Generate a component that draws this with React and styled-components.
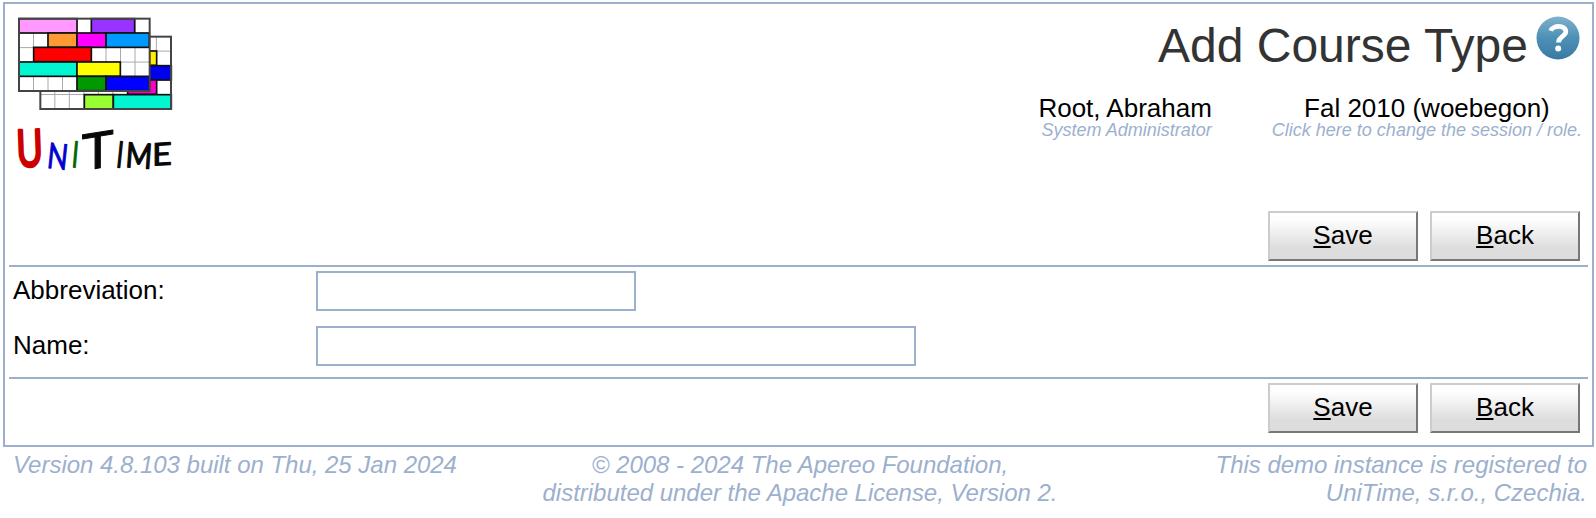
import React from "react";
import styled, { createGlobalStyle } from "styled-components";

const accent = "#9cb0ce";

const GlobalStyle = createGlobalStyle`
  * { box-sizing: border-box; }
  body {
    margin: 0;
    background: #fff;
    color: #000;
    font-family: "Liberation Sans", Arial, sans-serif;
    font-size: 26px;
  }
`;

const Page = styled.div`
  padding: 2px 2px 0 3px;
`;

const Frame = styled.main`
  height: 445px;
  border: 2px solid ${accent};
  padding: 0 4px;
`;

const Header = styled.header`
  display: flex;
  justify-content: space-between;
  align-items: flex-start;
  height: 207px;
  padding: 10px 6px 0 6px;
`;

const Logo = styled.svg`
  display: block;
  width: 170px;
  height: 180px;
  overflow: visible;
`;

const HeaderInfo = styled.div`
  display: flex;
  flex-direction: column;
  align-items: flex-end;
`;

const TitleRow = styled.div`
  display: flex;
  align-items: flex-start;
  gap: 7px;
  height: 77px;
  padding-right: 1px;
`;

const Title = styled.h1`
  margin: 4px 0 0;
  color: #333;
  font-size: 48px;
  font-weight: 400;
  line-height: 56px;
`;

const HelpIcon = styled.svg`
  display: block;
  width: 46px;
  height: 46px;
  margin-top: 1px;
`;

const Account = styled.div`
  display: flex;
  gap: 60px;
`;

const AccountItem = styled.div`
  display: flex;
  flex-direction: column;
  align-items: ${(p) => p.$align};
`;

const AccountValue = styled.div`
  line-height: 30px;
  height: 29px;
  padding-top: 2px;
`;

const AccountHint = styled.div`
  color: ${accent};
  font-size: 18px;
  font-style: italic;
  line-height: 20px;
`;

const ButtonBar = styled.div`
  display: flex;
  justify-content: flex-end;
  gap: 12px;
  padding: ${(p) => (p.$bottom ? "4px 8px 12px" : "0 8px 4px")};
`;

const Button = styled.button`
  width: 150px;
  height: 50px;
  padding: 0 0 2px;
  border: 2px solid;
  border-color: #ccc #777 #777 #ccc;
  border-radius: 0;
  background: linear-gradient(#fff 0%, #fcfcfc 18%, #ddd 76%, #ddd 100%);
  color: #000;
  font: inherit;
`;

const AccessKey = styled.span`
  text-decoration: underline;
  text-decoration-thickness: 2px;
  text-underline-offset: 2px;
`;

const Form = styled.section`
  display: flex;
  flex-direction: column;
  gap: 15px;
  padding: 4px 4px 11px 4px;
  border: solid ${accent};
  border-width: 2px 0;
`;

const Field = styled.label`
  display: grid;
  grid-template-columns: 303px auto;
  justify-content: start;
  height: 40px;
  line-height: 38px;
`;

const TextInput = styled.input`
  width: ${(p) => p.$width}px;
  height: 40px;
  border: 2px solid ${accent};
  border-radius: 0;
  background: #fff;
  font: inherit;
  outline: none;
`;

const Footer = styled.footer`
  display: grid;
  grid-template-columns: 1fr 530px 1fr;
  padding: 4px 7px 0 10px;
  color: ${accent};
  font-size: 24px;
  font-style: italic;
  letter-spacing: -0.02px;
  line-height: 28px;
`;

const FooterText = styled.div`
  text-align: ${(p) => p.$align};
  white-space: nowrap;
`;

const backBlocks = [
  [448, 153, 22, 43, "#ffee00"],
  [448, 197, 66, 43, "#0000f0"],
  [383, 240, 87, 43, "#f0c"],
  [253, 284, 87, 43, "#9f3"],
  [340, 284, 174, 43, "#00f5d0"],
];

const frontBlocks = [
  [57, 56, 174, 43, "#f9f"],
  [274, 56, 130, 43, "#93f"],
  [144, 99, 87, 43, "#f93"],
  [231, 99, 87, 43, "#f0f"],
  [318, 99, 130, 43, "#09f"],
  [101, 142, 173, 43, "#f00"],
  [57, 186, 174, 43, "#00f5d0"],
  [231, 186, 130, 43, "#ff0"],
  [231, 229, 87, 43, "#090"],
  [318, 229, 130, 43, "#00f"],
];

const letters = [
  { char: "U", x: 51, y: 501, size: 154, stretch: 0.7, tilt: "rotate(-2)", color: "#c00", weight: 8 },
  { char: "N", x: 139, y: 503, size: 106, stretch: 0.76, tilt: "rotate(6)", color: "#0000d0", weight: 3 },
  { char: "I", x: 214, y: 501, size: 108, stretch: 0.6, tilt: "rotate(5)", color: "#060", weight: 4 },
  { char: "T", x: 245, y: 512, size: 150, stretch: 1.08, tilt: "skewY(-9)", color: "#080808", weight: 3 },
  { char: "I", x: 347, y: 501, size: 108, stretch: 0.6, tilt: "rotate(6)", color: "#080808", weight: 5 },
  { char: "M", x: 375, y: 501, size: 104, stretch: 0.82, tilt: "rotate(4)", color: "#080808", weight: 4 },
  { char: "E", x: 456, y: 497, size: 94, stretch: 1.1, tilt: "skewY(-3)", color: "#080808", weight: 3 },
];

function Timetable({ x, y, blocks }) {
  const columns = [1, 2, 3, 4, 5, 6, 7, 8];
  const rows = [1, 2, 3, 4];
  return (
    <g>
      <rect x={x} y={y} width="392" height="217" fill="#fff" />
      <g stroke="#aaa" strokeWidth="3">
        {columns.map((c) => (
          <path key={c} d={`M${x + c * 43.5} ${y}v217`} />
        ))}
        {rows.map((r) => (
          <path key={r} d={`M${x} ${y + r * 43.4}h392`} />
        ))}
      </g>
      <g stroke="#111" strokeWidth="5">
        {blocks.map(([bx, by, w, h, fill]) => (
          <rect key={`${bx}-${by}`} x={bx} y={by} width={w} height={h} fill={fill} />
        ))}
      </g>
      <rect x={x} y={y} width="392" height="217" fill="none" stroke="#444" strokeWidth="6" />
    </g>
  );
}

function UniTimeLogo() {
  return (
    <Logo viewBox="45 42 510 540" aria-label="UniTime">
      <Timetable x={121} y={110} blocks={backBlocks} />
      <Timetable x={57} y={56} blocks={frontBlocks} />
      {letters.map(({ char, x, y, size, stretch, tilt, color, weight }) => (
        <text
          key={x}
          transform={`translate(${x} ${y}) ${tilt} scale(${stretch} 1)`}
          fontFamily="Lato, sans-serif"
          fontSize={size}
          fill={color}
          stroke={color}
          strokeWidth={weight}
          strokeLinejoin="round"
        >
          {char}
        </text>
      ))}
    </Logo>
  );
}

function Help() {
  return (
    <HelpIcon viewBox="0 0 46 46" aria-label="Help">
      <defs>
        <linearGradient id="help" x1="0" y1="0" x2="0" y2="1">
          <stop offset="0" stopColor="#80b1cd" />
          <stop offset="0.48" stopColor="#4e91b6" />
          <stop offset="1" stopColor="#397aa2" />
        </linearGradient>
      </defs>
      <circle cx="23" cy="23" r="21.5" fill="url(#help)" />
      <path
        d="M15.7 15.8C17.4 10.4 30.8 9.3 30.8 16.8C30.8 21.3 23.4 21.5 23.4 27.5"
        fill="none"
        stroke="#fff"
        strokeWidth="4.7"
      />
      <circle cx="23.2" cy="33.6" r="3" fill="#fff" />
    </HelpIcon>
  );
}

function Actions({ bottom }) {
  return (
    <ButtonBar $bottom={bottom}>
      <Button><AccessKey>S</AccessKey>ave</Button>
      <Button><AccessKey>B</AccessKey>ack</Button>
    </ButtonBar>
  );
}

export default function App() {
  return (
    <>
      <GlobalStyle />
      <Page>
        <Frame>
          <Header>
            <UniTimeLogo />
            <HeaderInfo>
              <TitleRow>
                <Title>Add Course Type</Title>
                <Help />
              </TitleRow>
              <Account>
                <AccountItem $align="flex-end">
                  <AccountValue>Root, Abraham</AccountValue>
                  <AccountHint>System Administrator</AccountHint>
                </AccountItem>
                <AccountItem $align="center">
                  <AccountValue>Fal 2010 (woebegon)</AccountValue>
                  <AccountHint>Click here to change the session / role.</AccountHint>
                </AccountItem>
              </Account>
            </HeaderInfo>
          </Header>
          <Actions />
          <Form>
            <Field>
              Abbreviation:
              <TextInput $width={320} />
            </Field>
            <Field>
              Name:
              <TextInput $width={600} />
            </Field>
          </Form>
          <Actions bottom />
        </Frame>
        <Footer>
          <FooterText $align="left">Version 4.8.103 built on Thu, 25 Jan 2024</FooterText>
          <FooterText $align="center">
            © 2008 - 2024 The Apereo Foundation,
            <br />
            distributed under the Apache License, Version 2.
          </FooterText>
          <FooterText $align="right">
            This demo instance is registered to
            <br />
            UniTime, s.r.o., Czechia.
          </FooterText>
        </Footer>
      </Page>
    </>
  );
}
